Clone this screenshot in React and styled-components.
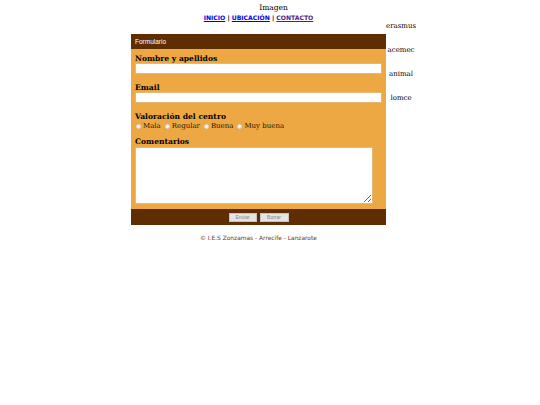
import React from "react";
import styled, { createGlobalStyle } from "styled-components";

const GlobalStyle = createGlobalStyle`
  html, body {
    margin: 0;
    padding: 0;
    background: #fff;
  }
  body {
    font-family: "DejaVu Serif", serif;
    color: #000;
  }
`;

const Page = styled.div`
  width: 285px;
  margin-left: 131px;
`;

const Banner = styled.div`
  padding-top: 3px;
  font-size: 7.5px;
  line-height: 10px;
  text-align: center;
`;

const Row = styled.div`
  display: flex;
`;

const Main = styled.div`
  width: 255px;
`;

const Nav = styled.nav`
  text-align: center;
  font-family: "DejaVu Sans", sans-serif;
  font-weight: bold;
  font-size: 6.1px;
  line-height: 10px;
  margin-bottom: 11px;

  a {
    color: #0000ee;
  }
  a.visited {
    color: #551a8b;
  }
`;

const Aside = styled.aside`
  width: 30px;
  display: flex;
  flex-direction: column;
  align-items: center;
  gap: 14px;
  padding-top: 8px;
  font-size: 7px;
  line-height: 10px;
  color: #000;
`;

const Form = styled.form`
  background: #eda843;
`;

const Bar = styled.div`
  background: #5e2d01;
  height: ${(p) => p.$h}px;
  display: flex;
  align-items: center;
  justify-content: ${(p) => (p.$center ? "center" : "flex-start")};
  gap: 3px;
  padding: 0 4px;
  color: #fff;
  font-family: "Liberation Sans", sans-serif;
  font-size: 6.5px;
`;

const Body = styled.div`
  padding: 5px 4px 5px;
`;

const Label = styled.div`
  font-weight: bold;
  font-size: 7.6px;
  line-height: 9px;
  margin-top: ${(p) => p.$top || 0}px;
`;

const TextInput = styled.input`
  display: block;
  box-sizing: border-box;
  width: 247px;
  height: 11px;
  margin: 0;
  border: 1px solid #e3b878;
  background: #fff;
  padding: 0;
`;

const Radios = styled.div`
  display: flex;
  align-items: center;
  font-size: 7px;
  line-height: 10px;
  color: #2a1600;

  label {
    display: flex;
    align-items: center;
    margin-right: 3px;
  }
  input {
    appearance: none;
    box-sizing: border-box;
    width: 5px;
    height: 5px;
    margin: 0 2px 0 1px;
    border-radius: 50%;
    background: #f1f1f1;
    border: 1px solid #d8d8d8;
  }
`;

const Comments = styled.textarea`
  display: block;
  box-sizing: border-box;
  width: 238px;
  height: 57px;
  margin: 1px 0 0;
  border: 1px solid #e3b878;
  background: #fff;
  padding: 0;
`;

const Button = styled.button`
  box-sizing: border-box;
  width: ${(p) => p.$w}px;
  height: 9px;
  padding: 0;
  border: 1px solid #c4c4c4;
  background: #e4e4e4;
  color: #888;
  font-family: "Liberation Sans", sans-serif;
  font-size: 5px;
  line-height: 7px;
`;

const Footer = styled.footer`
  margin-top: 8px;
  text-align: center;
  font-family: "DejaVu Sans", sans-serif;
  font-size: 5.9px;
  line-height: 10px;
  color: #6b3a10;
`;

export default function App() {
  const ratings = ["Mala", "Regular", "Buena", "Muy buena"];
  return (
    <>
      <GlobalStyle />
      <Page>
        <Banner>Imagen</Banner>
        <Row>
          <Main>
            <Nav>
              <a href="#inicio">INICIO</a> | <a href="#ubicacion">UBICACIÓN</a> |{" "}
              <a className="visited" href="#contacto">CONTACTO</a>
            </Nav>
            <Form onSubmit={(e) => e.preventDefault()}>
              <Bar $h={15}>Formulario</Bar>
              <Body>
                <Label>Nombre y apellidos</Label>
                <TextInput type="text" />
                <Label $top={9}>Email</Label>
                <TextInput type="text" />
                <Label $top={9}>Valoración del centro</Label>
                <Radios>
                  {ratings.map((r) => (
                    <label key={r}>
                      <input type="radio" name="valoracion" />
                      {r}
                    </label>
                  ))}
                </Radios>
                <Label $top={6}>Comentarios</Label>
                <Comments />
              </Body>
              <Bar $h={16} $center>
                <Button type="submit" $w={28}>Enviar</Button>
                <Button type="reset" $w={29}>Borrar</Button>
              </Bar>
            </Form>
            <Footer>© I.E.S Zonzamas - Arrecife - Lanzarote</Footer>
          </Main>
          <Aside>
            <div>erasmus</div>
            <div>acemec</div>
            <div>animal</div>
            <div>lomce</div>
          </Aside>
        </Row>
      </Page>
    </>
  );
}
